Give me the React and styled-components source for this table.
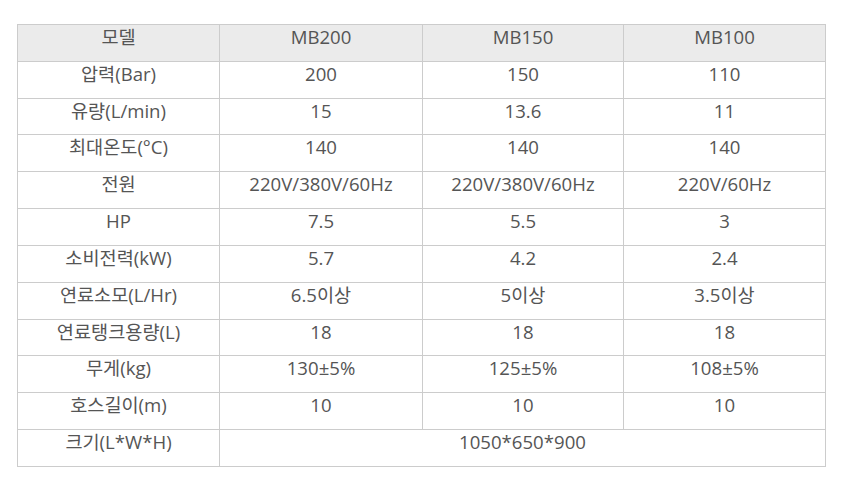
import React from "react";
import styled, { createGlobalStyle } from "styled-components";

const Global = createGlobalStyle`
  html, body { margin: 0; padding: 0; background: #fff; }
  body { font-family: "Open Sans", "Noto Sans CJK KR", sans-serif; }
`;

const Page = styled.div`
  padding: 24px 0 0 17px;
`;

const Table = styled.table`
  width: 808px;
  border-collapse: collapse;
  table-layout: fixed;
  font-family: "Open Sans", "Noto Sans CJK KR", sans-serif;
  font-size: 18.6px;
  color: #555;
`;

const Row = styled.tr`
  height: 36.83px;
  background: ${(p) => (p.$head ? "#ebebeb" : "#fff")};
`;

const Cell = styled.td`
  border: 1px solid #cccccc;
  text-align: center;
  vertical-align: top;
  padding: 0;
  line-height: 23px;
  white-space: nowrap;
  box-sizing: border-box;
`;

const rows = [
  ["압력(Bar)", "200", "150", "110"],
  ["유량(L/min)", "15", "13.6", "11"],
  ["최대온도(°C)", "140", "140", "140"],
  ["전원", "220V/380V/60Hz", "220V/380V/60Hz", "220V/60Hz"],
  ["HP", "7.5", "5.5", "3"],
  ["소비전력(kW)", "5.7", "4.2", "2.4"],
  ["연료소모(L/Hr)", "6.5이상", "5이상", "3.5이상"],
  ["연료탱크용량(L)", "18", "18", "18"],
  ["무게(kg)", "130±5%", "125±5%", "108±5%"],
  ["호스길이(m)", "10", "10", "10"],
];

export default function App() {
  return (
    <Page>
      <Global />
      <Table>
        <colgroup>
          <col style={{ width: "202px" }} />
          <col style={{ width: "203px" }} />
          <col style={{ width: "201px" }} />
          <col style={{ width: "202px" }} />
        </colgroup>
        <tbody>
          <Row $head>
            <Cell>모델</Cell>
            <Cell>MB200</Cell>
            <Cell>MB150</Cell>
            <Cell>MB100</Cell>
          </Row>
          {rows.map((r) => (
            <Row key={r[0]}>
              {r.map((c, i) => (
                <Cell key={i}>{c}</Cell>
              ))}
            </Row>
          ))}
          <Row>
            <Cell>크기(L*W*H)</Cell>
            <Cell colSpan={3}>1050*650*900</Cell>
          </Row>
        </tbody>
      </Table>
    </Page>
  );
}
